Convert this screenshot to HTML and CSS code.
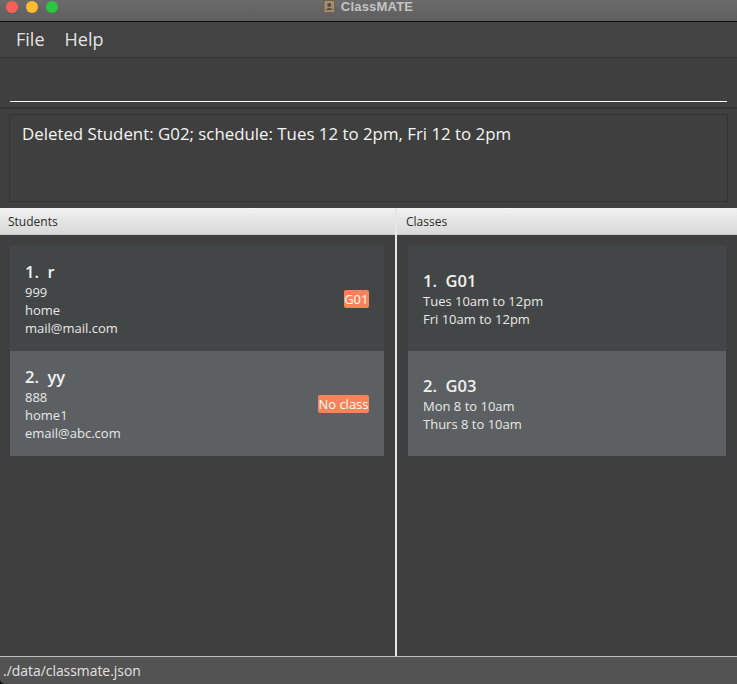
FILE: index.html
```html
<html>
    <head>
        <link rel="stylesheet" href="styles.css">
        <title>ClassMATE</title>
    </head>
    <body>
        <div class="titlebar">
            <div class="lights">
                <span class="light red"></span>
                <span class="light yellow"></span>
                <span class="light green"></span>
            </div>
            <div class="title">
                <svg class="app-icon" width="12" height="13" viewBox="0 0 12 13">
                    <rect width="12" height="13" fill="#6f6253"/>
                    <rect x="1.5" y="1" width="9.5" height="11" fill="#a58d68"/>
                    <circle cx="6.2" cy="5" r="2" fill="#4d4a47"/>
                    <path d="M2.5 10 Q6.2 6 10 10 Z" fill="#4d4a47"/>
                </svg>
                <span>ClassMATE</span>
            </div>
        </div>
        <div class="menubar">
            <span class="menu-item">File</span>
            <span class="menu-item">Help</span>
        </div>
        <div class="command">
            <div class="command-line"></div>
        </div>
        <div class="result-wrap">
            <div class="result">Deleted Student: G02; schedule: Tues 12 to 2pm, Fri 12 to 2pm</div>
        </div>
        <div class="panes">
            <div class="pane pane-left">
                <div class="pane-header">Students</div>
                <div class="list">
                    <div class="card">
                        <div class="card-text">
                            <div class="card-name">1.&nbsp; r</div>
                            <div class="card-line">999</div>
                            <div class="card-line">home</div>
                            <div class="card-line">mail@mail.com</div>
                        </div>
                        <span class="tag">G01</span>
                    </div>
                    <div class="card card-even">
                        <div class="card-text">
                            <div class="card-name">2.&nbsp; yy</div>
                            <div class="card-line">888</div>
                            <div class="card-line">home1</div>
                            <div class="card-line">email@abc.com</div>
                        </div>
                        <span class="tag">No class</span>
                    </div>
                </div>
            </div>
            <div class="pane pane-right">
                <div class="pane-header">Classes</div>
                <div class="list">
                    <div class="card">
                        <div class="card-text">
                            <div class="card-name">1.&nbsp; G01</div>
                            <div class="card-line">Tues 10am to 12pm</div>
                            <div class="card-line">Fri 10am to 12pm</div>
                        </div>
                    </div>
                    <div class="card card-even">
                        <div class="card-text">
                            <div class="card-name">2.&nbsp; G03</div>
                            <div class="card-line">Mon 8 to 10am</div>
                            <div class="card-line">Thurs 8 to 10am</div>
                        </div>
                    </div>
                </div>
            </div>
        </div>
        <div class="statusbar">./data/classmate.json</div>
    </body>
</html>
```

FILE: styles.css
```css
html, body {
    height: 100%;
}

html {
    background-color: #111;
}

body {
    margin: 0;
    display: flex;
    flex-direction: column;
    overflow: hidden;
    background-color: #3f3f3f;
    border-bottom-left-radius: 5px;
    font-family: "Open Sans", sans-serif;
    color: #fff;
}

/* Window chrome */
.titlebar {
    height: 21px;
    flex: none;
    display: flex;
    align-items: center;
    justify-content: center;
    position: relative;
    border-bottom: 1px solid #0c0c0c;
    background: linear-gradient(#6b6b6b, #5e5e5e);
}

.lights {
    position: absolute;
    left: 6px;
    top: 1px;
    display: flex;
    gap: 8px;
}

.light {
    width: 12px;
    height: 12px;
    border-radius: 50%;
}

.red { background-color: #fd5f57; }
.yellow { background-color: #febc2e; }
.green { background-color: #29c840; }

.title {
    display: flex;
    align-items: center;
    gap: 6px;
    margin-top: -8px;
    margin-left: -1px;
    font-family: "Liberation Sans", sans-serif;
    font-size: 13px;
    font-weight: bold;
    letter-spacing: 0.2px;
    color: #c4c4c4;
}

.menubar {
    height: 36px;
    flex: none;
    display: flex;
    align-items: center;
    gap: 20px;
    padding-left: 16px;
    padding-bottom: 2px;
    box-sizing: border-box;
    border-bottom: 1px solid #333;
    background-color: #434343;
    font-size: 18px;
    color: #e4e4e4;
}

.command {
    height: 51px;
    flex: none;
    padding: 43px 10px 0;
    box-sizing: border-box;
    border-bottom: 2px solid #333;
}

.command-line {
    height: 1px;
    background-color: #fff;
}

.result-wrap {
    height: 99px;
    flex: none;
    padding: 5px 9px 6px;
    box-sizing: border-box;
}

.result {
    height: 100%;
    box-sizing: border-box;
    padding: 7px 12px;
    border: 1px solid #333;
    font-size: 16.85px;
    color: #f4f4f4;
}

.panes {
    flex: 1;
    display: flex;
    min-height: 0;
}

.pane-left {
    width: 395px;
    flex: none;
}

.pane-right {
    flex: 1;
    border-left: 2px solid #e6e6e6;
}

.pane-header {
    height: 27px;
    box-sizing: border-box;
    padding-left: 8px;
    display: flex;
    align-items: center;
    border-top: 1px solid #f4f4f4;
    border-bottom: 1px solid #c8c8c8;
    background: linear-gradient(#f0f0f0, #d9d9d9);
    font-size: 12px;
    color: #2a2a2a;
}

.pane-right .pane-header {
    padding-left: 9px;
}

.list {
    padding: 11px 11px 0 10px;
}

.pane-right .list {
    padding-left: 11px;
}

.card {
    height: 105px;
    box-sizing: border-box;
    display: flex;
    align-items: center;
    justify-content: space-between;
    padding: 0 15px;
    background-color: #434646;
    color: #e8e8e8;
}

.card-even {
    background-color: #5c6062;
}

.card-name {
    margin-bottom: -1px;
    font-size: 16.5px;
    font-weight: 600;
    line-height: 24px;
    color: #f2f2f2;
}

.card-line {
    font-size: 13px;
    line-height: 18px;
}

.tag {
    padding: 0 0.5px;
    border-radius: 2px;
    background-color: #fb8158;
    font-size: 13px;
    line-height: 18px;
    color: #fff;
}

.statusbar {
    height: 28px;
    flex: none;
    box-sizing: border-box;
    padding-left: 3px;
    display: flex;
    align-items: center;
    border-top: 1px solid #bdbdbd;
    border-bottom-left-radius: 5px;
    background-color: #535353;
    font-size: 13.9px;
    color: #e2e2e2;
}
```
